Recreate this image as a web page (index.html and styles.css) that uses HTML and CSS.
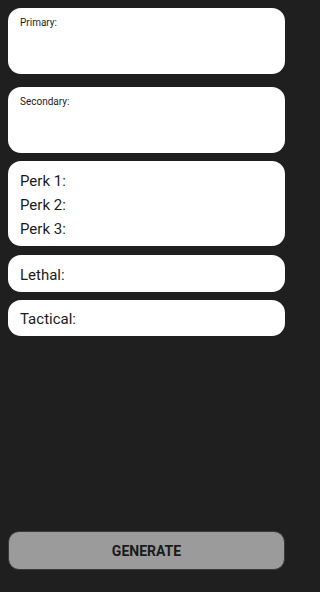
FILE: index.html
```html
<!DOCTYPE html>
<html>
<head>
<meta charset="utf-8">
<link rel="stylesheet" href="styles.css">
</head>
<body>
<div class="screen">
  <div class="card card-weapon"><div class="small">Primary:</div></div>
  <div class="card card-weapon second"><div class="small">Secondary:</div></div>
  <div class="card card-perks">
    <div class="line">Perk 1:</div>
    <div class="line">Perk 2:</div>
    <div class="line">Perk 3:</div>
  </div>
  <div class="card card-single"><div class="line">Lethal:</div></div>
  <div class="card card-single tact"><div class="line">Tactical:</div></div>
  <button class="generate">GENERATE</button>
</div>
</body>
</html>
```
FILE: styles.css
```css
html, body {
  margin: 0;
  padding: 0;
  background: #1f1f1f;
  height: 100%;
}
.screen {
  box-sizing: border-box;
  width: 293px;
  height: 592px;
  padding: 8px 8px 22px 8px;
  display: flex;
  flex-direction: column;
  font-family: Roboto, "Noto Sans", sans-serif;
  color: #1c1c1c;
}
.card {
  background: #ffffff;
  border-radius: 13px;
  box-sizing: border-box;
  padding: 0 12px;
}
.card-weapon {
  height: 66px;
  padding-top: 9px;
}
.card-weapon.second {
  margin-top: 13px;
}
.small {
  font-size: 10px;
  line-height: 12px;
}
.card-perks {
  margin-top: 8px;
  height: 85px;
  padding-top: 8px;
}
.line {
  font-size: 15px;
  line-height: 24px;
}
.card-single {
  margin-top: 9px;
  height: 37px;
  padding-top: 8px;
}
.card-single.tact {
  margin-top: 8px;
  height: 36px;
  padding-top: 7px;
}
.generate {
  margin-top: auto;
  height: 39px;
  width: 100%;
  background: #9b9b9b;
  border: 1px solid #3a3a3a;
  border-radius: 11px;
  font-family: Roboto, "Noto Sans", sans-serif;
  font-weight: 700;
  font-size: 14px;
  color: #1a1a1a;
  padding: 0;
}
```
